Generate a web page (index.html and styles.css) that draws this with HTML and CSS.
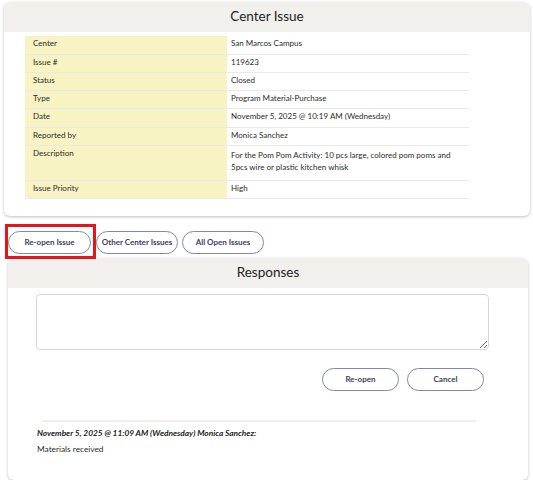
FILE: index.html
```html
<!DOCTYPE html>
<html lang="en">
<head>
<meta charset="UTF-8">
<title>Center Issue</title>
<link rel="stylesheet" href="styles.css">
</head>
<body>

<div class="card issue-card">
  <div class="card-header">Center Issue</div>
  <table class="issue-table">
    <tr><td class="label">Center</td><td>San Marcos Campus</td></tr>
    <tr><td class="label">Issue #</td><td>119623</td></tr>
    <tr><td class="label">Status</td><td>Closed</td></tr>
    <tr><td class="label">Type</td><td>Program Material-Purchase</td></tr>
    <tr class="date"><td class="label">Date</td><td>November 5, 2025 @ 10:19 AM (Wednesday)</td></tr>
    <tr><td class="label">Reported by</td><td>Monica Sanchez</td></tr>
    <tr class="tall"><td class="label">Description</td><td>For the Pom Pom Activity: 10 pcs large, colored pom poms and<br>5pcs wire or plastic kitchen whisk</td></tr>
    <tr><td class="label">Issue Priority</td><td>High</td></tr>
  </table>
</div>

<div class="actions">
  <span class="highlight"><button class="pill pill-teal">Re-open Issue</button></span>
  <button class="pill">Other Center Issues</button>
  <button class="pill">All Open Issues</button>
</div>

<div class="card responses-card">
  <div class="card-header">Responses</div>
  <textarea class="response-input"></textarea>
  <div class="response-buttons">
    <button class="pill pill-wide">Re-open</button>
    <button class="pill pill-wide">Cancel</button>
  </div>
  <hr class="divider">
  <div class="response">
    <p class="response-meta">November 5, 2025 @ 11:09 AM (Wednesday) Monica Sanchez:</p>
    <p class="response-text">Materials received</p>
  </div>
</div>

</body>
</html>
```

FILE: styles.css
```css
body {
  font-family: 'Lato', 'Open Sans', sans-serif;
  margin: 0;
  padding: 0;
  background-color: #fff;
  color: #2b2b2b;
  font-size: 8.3px;
}

.card {
  background: white;
  border-radius: 6px;
  box-shadow: 0 1px 3px rgba(0, 0, 0, 0.25);
  overflow: hidden;
}

.issue-card {
  margin: 2px 3px 0 4px;
  padding-bottom: 17px;
}

.card-header {
  background-color: #f2f0ec;
  height: 30px;
  line-height: 29px;
  text-align: center;
  font-size: 13.5px;
  color: #222;
}

.issue-table {
  margin: 4px 0 0 21px;
  width: 444px;
  border-collapse: collapse;
  table-layout: fixed;
  font-size: 8px;
}

.issue-table td {
  box-sizing: border-box;
  height: 18px;
  padding: 1px 4px 0;
  border-bottom: 1px solid #e9e9e6;
  vertical-align: top;
  line-height: 12px;
}

.issue-table td.label {
  width: 202px;
  background-color: #f8f3c3;
  padding-left: 8px;
}

.issue-table tr.date td {
  height: 19px;
}

.issue-table tr.tall td {
  height: 35px;
  padding-top: 3px;
}

.issue-table tr.tall td.label {
  padding-top: 1px;
}

.actions {
  display: flex;
  align-items: center;
  margin: 15px 0 0 8px;
  gap: 4px;
}

.highlight {
  position: relative;
  display: inline-block;
  margin-right: 1px;
}

.highlight::after {
  content: "";
  position: absolute;
  top: -7px;
  left: -3px;
  right: -5px;
  bottom: -5px;
  border: 3px solid #e8141b;
  pointer-events: none;
}

.pill {
  display: block;
  height: 23px;
  width: 82px;
  padding: 0;
  border: 1px solid #8383b9;
  border-radius: 12px;
  background: white;
  font-family: inherit;
  font-size: 8px;
  font-weight: bold;
  color: #3c3c66;
  cursor: pointer;
}

.pill-teal {
  width: 83px;
  border-color: #6e9597;
}

.responses-card {
  margin: 4px 5px 0 8px;
  padding-bottom: 26px;
}

.response-input {
  display: block;
  margin: 6px 0 0 28px;
  width: 453px;
  height: 56px;
  box-sizing: border-box;
  border: 1px solid #d6d6d6;
  border-radius: 4px;
  resize: vertical;
}

.response-buttons {
  display: flex;
  justify-content: flex-end;
  gap: 8px;
  margin: 18px 44px 0 0;
}

.pill-wide {
  width: 77px;
}

.divider {
  border: none;
  border-top: 2px solid #efefef;
  margin: 29px 52px 0 34px;
}

.response {
  padding-left: 29px;
}

.response p {
  line-height: 10px;
}

.response-meta {
  margin: 6px 0 0;
  font-style: italic;
  font-weight: bold;
  color: #222;
}

.response-text {
  margin: 6px 0 0;
}
```
